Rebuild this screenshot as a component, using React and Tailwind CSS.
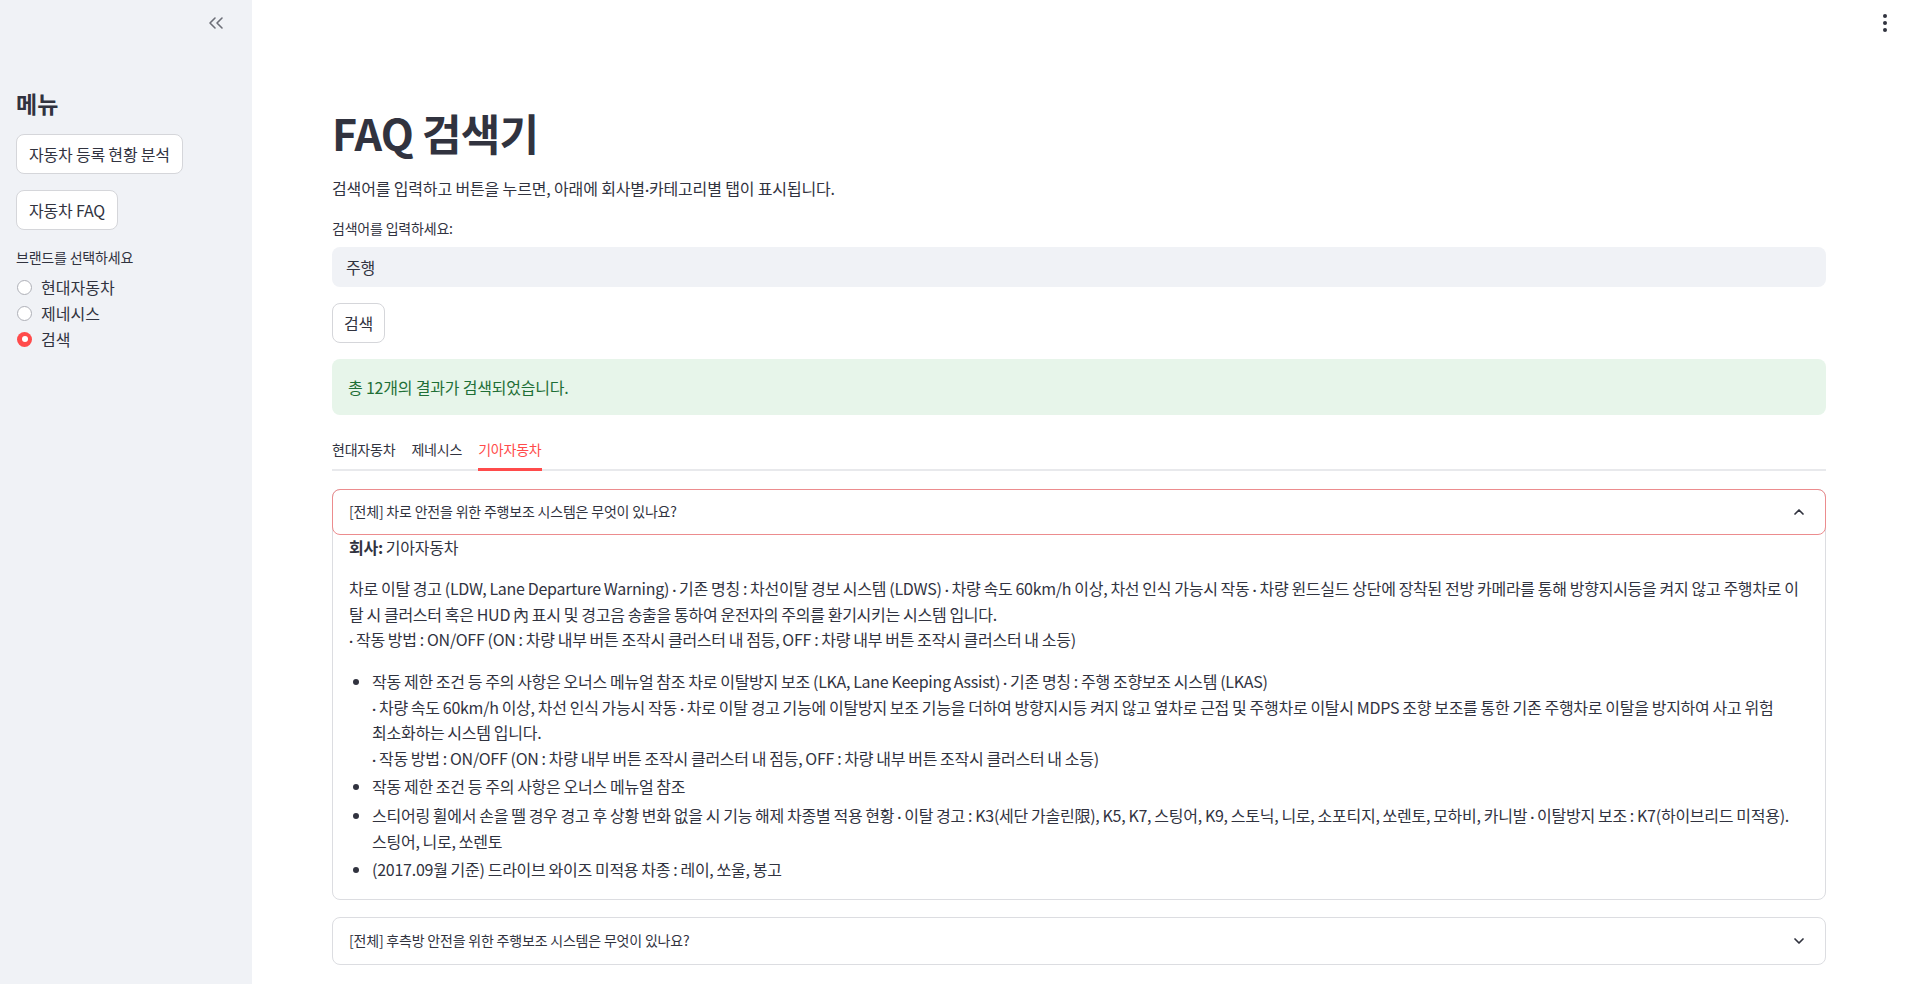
import React from 'react'
import { ChevronsLeft, ChevronUp, ChevronDown } from 'lucide-react'

// middle dots come out full-width in the CJK face, so set them in Lato
const Dots = ({ text }) =>
  text.split('·').flatMap((s, i) =>
    i ? [<span key={i} className="font-['Lato']">·</span>, s] : [s]
  )

const Lines = ({ lines }) =>
  lines.map((l, i) => (
    <React.Fragment key={i}>
      {i > 0 && <br />}
      <Dots text={l} />
    </React.Fragment>
  ))

const Radio = ({ label, checked }) => (
  <div className="flex items-center h-[26px]">
    <span
      className={`ml-px flex items-center justify-center w-[15px] h-[15px] rounded-full ${
        checked ? 'bg-[#ff4b4b]' : 'border border-[#aeb0b7] bg-white'
      }`}
    >
      {checked && <span className="w-[6px] h-[6px] rounded-full bg-white" />}
    </span>
    <span className="ml-[9px] text-[16px]">{label}</span>
  </div>
)

const SideButton = ({ children }) => (
  <button className="h-[40px] px-[12px] rounded-lg border border-[#d5d6da] bg-white text-[16px] tracking-[-0.2px] text-[#31333f]">
    {children}
  </button>
)

// lines broken where the page breaks them
const para = [
  '차로 이탈 경고 (LDW, Lane Departure Warning) · 기존 명칭 : 차선이탈 경보 시스템 (LDWS) · 차량 속도 60km/h 이상, 차선 인식 가능시 작동 · 차량 윈드실드 상단에 장착된 전방 카메라를 통해 방향지시등을 켜지 않고 주행차로 이',
  '탈 시 클러스터 혹은 HUD 內 표시 및 경고음 송출을 통하여 운전자의 주의를 환기시키는 시스템 입니다.',
  '· 작동 방법 : ON/OFF (ON : 차량 내부 버튼 조작시 클러스터 내 점등, OFF : 차량 내부 버튼 조작시 클러스터 내 소등)',
]

const items = [
  [
    '작동 제한 조건 등 주의 사항은 오너스 메뉴얼 참조 차로 이탈방지 보조 (LKA, Lane Keeping Assist) · 기존 명칭 : 주행 조향보조 시스템 (LKAS)',
    '· 차량 속도 60km/h 이상, 차선 인식 가능시 작동 · 차로 이탈 경고 기능에 이탈방지 보조 기능을 더하여 방향지시등 켜지 않고 옆차로 근접 및 주행차로 이탈시 MDPS 조향 보조를 통한 기존 주행차로 이탈을 방지하여 사고 위험',
    '최소화하는 시스템 입니다.',
    '· 작동 방법 : ON/OFF (ON : 차량 내부 버튼 조작시 클러스터 내 점등, OFF : 차량 내부 버튼 조작시 클러스터 내 소등)',
  ],
  ['작동 제한 조건 등 주의 사항은 오너스 메뉴얼 참조'],
  [
    '스티어링 휠에서 손을 뗄 경우 경고 후 상황 변화 없을 시 기능 해제 차종별 적용 현황 · 이탈 경고 : K3(세단 가솔린限), K5, K7, 스팅어, K9, 스토닉, 니로, 소포티지, 쏘렌토, 모하비, 카니발 · 이탈방지 보조 : K7(하이브리드 미적용).',
    '스팅어, 니로, 쏘렌토',
  ],
  ['(2017.09월 기준) 드라이브 와이즈 미적용 차종 : 레이, 쏘울, 봉고'],
]

export default function App() {
  return (
    <div className="relative flex w-full h-screen overflow-hidden bg-white text-[#31333f] font-['Noto_Sans_CJK_KR',sans-serif]">
      {/* Sidebar */}
      <aside className="w-[252px] shrink-0 h-full bg-[#f0f2f6] pl-[16px] pr-[24px]">
        <div className="flex justify-end pt-[11px]">
          <ChevronsLeft size={24} strokeWidth={1.6} className="text-[#6d6f78]" />
        </div>
        <h2 className="mt-[55px] text-[23px] leading-[27px] font-bold">메뉴</h2>
        <div className="mt-[17px] flex flex-col items-start gap-[16px]">
          <SideButton>자동차 등록 현황 분석</SideButton>
          <SideButton>자동차 FAQ</SideButton>
        </div>
        <p className="mt-[17px] text-[14px] leading-[20px] tracking-[-0.2px]">브랜드를 선택하세요</p>
        <div className="mt-[7px] flex flex-col">
          <Radio label="현대자동차" />
          <Radio label="제네시스" />
          <Radio label="검색" checked />
        </div>
      </aside>

      {/* Main */}
      <main className="relative flex-1 h-full overflow-hidden pl-[80px] pr-[88px] pt-[108px] tracking-[-0.2px]">
        <div className="absolute right-[27px] top-[14px] flex flex-col gap-[3px]">
          <span className="w-[4px] h-[4px] rounded-full bg-[#31333f]" />
          <span className="w-[4px] h-[4px] rounded-full bg-[#31333f]" />
          <span className="w-[4px] h-[4px] rounded-full bg-[#31333f]" />
        </div>

        <h1 className="text-[43px] leading-[48px] font-bold tracking-[-0.8px]">FAQ 검색기</h1>
        <p className="mt-[20px] text-[16px] leading-[25.6px] tracking-[-0.15px]">
          <Dots text="검색어를 입력하고 버튼을 누르면, 아래에 회사별·카테고리별 탭이 표시됩니다." />
        </p>

        <p className="mt-[15px] text-[14px] leading-[22px]">검색어를 입력하세요:</p>
        <div className="mt-[8px] h-[40px] rounded-lg bg-[#f0f2f6] px-[14px] flex items-center text-[16px]">
          주행
        </div>

        <button className="mt-[16px] h-[40px] px-[11px] rounded-lg border border-[#d5d6da] bg-white text-[16px]">
          검색
        </button>

        <div className="mt-[16px] h-[56px] rounded-lg bg-[#e7f5ea] px-[16px] flex items-center text-[16px] text-[#1f6f37]">
          총 12개의 결과가 검색되었습니다.
        </div>

        {/* Tabs */}
        <div className="mt-[16px] flex gap-[16px] border-b-2 border-[#e8e9ec]">
          <div className="h-[40px] -mb-[2px] border-b-2 border-transparent flex items-center text-[14px]">현대자동차</div>
          <div className="h-[40px] -mb-[2px] border-b-2 border-transparent flex items-center text-[14px]">제네시스</div>
          <div className="h-[40px] -mb-[2px] border-b-[3px] border-[#ff4b4b] flex items-center text-[14px] text-[#ff4b4b]">기아자동차</div>
        </div>

        {/* Expander 1 (open) */}
        <div className="mt-[18px] rounded-lg border border-[#dcdde1]">
          <div className="-mx-px -mt-px h-[46px] rounded-lg border border-[#ec8c8e] pl-[16px] pr-[18px] flex items-center justify-between text-[14px]">
            <span>[전체] 차로 안전을 위한 주행보조 시스템은 무엇이 있나요?</span>
            <ChevronUp size={16} strokeWidth={2.6} />
          </div>
          <div className="px-[16px] pb-[16px] text-[16px] leading-[25.6px] whitespace-nowrap tracking-[-0.25px] [word-spacing:-0.35px]">
            <p className="mb-[16px]">
              <b>회사:</b> 기아자동차
            </p>
            <p className="mb-[16px]">
              <Lines lines={para} />
            </p>
            <ul className="list-disc pl-[23px] flex flex-col gap-[3px]">
              {items.map((lines, i) => (
                <li key={i}>
                  <Lines lines={lines} />
                </li>
              ))}
            </ul>
          </div>
        </div>

        {/* Expander 2 (closed) */}
        <div className="mt-[17px] rounded-lg border border-[#dcdde1]">
          <div className="h-[46px] pl-[16px] pr-[18px] flex items-center justify-between text-[14px]">
            <span>[전체] 후측방 안전을 위한 주행보조 시스템은 무엇이 있나요?</span>
            <ChevronDown size={16} strokeWidth={2.6} />
          </div>
        </div>
      </main>
    </div>
  )
}
